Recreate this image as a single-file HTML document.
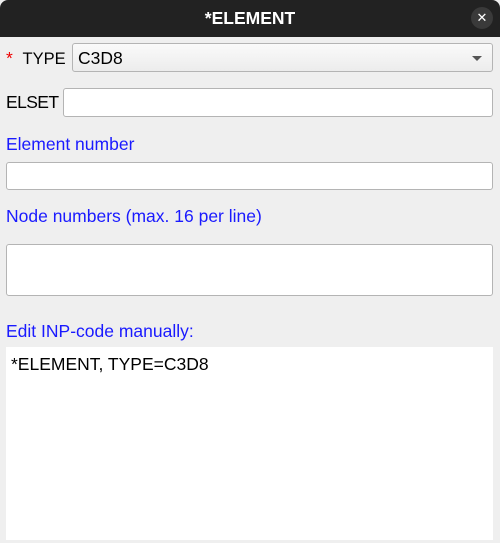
<!DOCTYPE html>
<html><head><style>
*{margin:0;padding:0;box-sizing:border-box}
body{width:500px;height:543px;background:#efefef;font-family:"Liberation Sans","DejaVu Sans",sans-serif;font-size:17.5px;color:#000;position:relative;overflow:hidden}
.title{position:absolute;left:0;top:0;width:500px;height:37px;background:#222;border-radius:8px 8px 0 0;color:#fff;font-weight:bold;text-align:center;line-height:37px;font-size:17.5px}
.close{position:absolute;right:7px;top:7px;width:22px;height:22px;border-radius:50%;background:#3a3a3a;color:#fff;font-size:13px;line-height:22px;text-align:center;font-weight:normal}
.t{position:absolute;white-space:nowrap}
.blue{color:#1a1aff}
.box{position:absolute;background:#fff;border:1px solid #b4b4b4;border-radius:3px}
</style></head><body>
<div class="title">*ELEMENT<div class="close">✕</div></div>
<div class="t" style="left:6px;top:48px"><span style="color:#e00">*</span>&nbsp; <span style="font-size:16.5px">TYPE</span></div>
<div class="box" style="left:72px;top:43px;width:421px;height:29px;background:linear-gradient(#fafafa,#ececec)"><span class="t" style="left:5px;top:4px">C3D8</span>
<span class="t" style="right:10px;top:12px;width:0;height:0;border-left:5px solid transparent;border-right:5px solid transparent;border-top:5px solid #555"></span></div>
<div class="t" style="left:6px;top:92px;font-size:17.5px;letter-spacing:-0.6px">ELSET</div>
<div class="box" style="left:63px;top:88px;width:430px;height:29px"></div>
<div class="t blue" style="left:6px;top:134px">Element number</div>
<div class="box" style="left:6px;top:162px;width:487px;height:28px"></div>
<div class="t blue" style="left:6px;top:206px">Node numbers (max. 16 per line)</div>
<div class="box" style="left:6px;top:244px;width:487px;height:52px"></div>
<div class="t blue" style="left:6px;top:321px">Edit INP-code manually:</div>
<div style="position:absolute;left:6px;top:347px;width:487px;height:193px;background:#fff"></div>
<div class="t" style="left:11px;top:354px">*ELEMENT, TYPE=C3D8</div>
</body></html>
